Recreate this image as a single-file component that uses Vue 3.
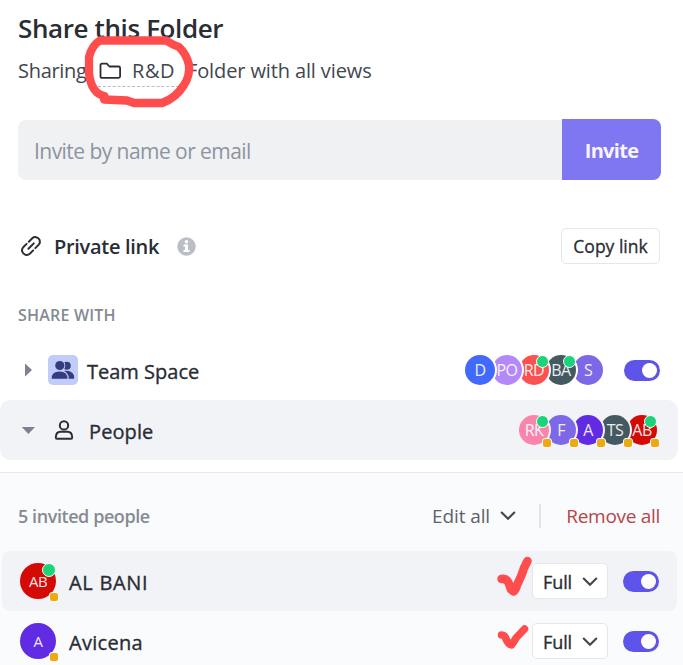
<script setup>
const team = [
  { t: 'D', c: '#4169fb' },
  { t: 'PO', c: '#b388f8' },
  { t: 'RD', c: '#fb5151', on: true },
  { t: 'BA', c: '#455a60', on: true },
  { t: 'S', c: '#7d68e8' },
]
const people = [
  { t: 'RK', c: '#f985ad', on: true },
  { t: 'F', c: '#7d68e8' },
  { t: 'A', c: '#612be3' },
  { t: 'TS', c: '#455a60' },
  { t: 'AB', c: '#d30a05', on: true },
]
const invited = [
  { name: 'AL BANI', t: 'AB', c: '#d30a05', on: true, hot: true, cls: 'n1' },
  { name: 'Avicena', t: 'A', c: '#612be3', on: false, hot: false, cls: 'n2' },
]
</script>

<template>
  <main class="share">
    <h1><span>Share this Folder</span></h1>
    <div class="sub">
      <span class="s1">Sharing</span>
      <span class="folder">
        <svg width="23" height="18" viewBox="0 0 23 18"><path d="M1.500 14.500V3.200Q1.500 1.700 3 1.700H7.800L10.400 4.500H19.600Q21.100 4.500 21.100 6V14.300Q21.100 15.800 19.600 15.800H3Q1.500 15.800 1.500 14.500Z" fill="none" stroke="#2b2f34" stroke-width="1.800" stroke-linejoin="round" /></svg>
        <span class="rd">R&amp;D</span>
      </span>
      <span class="s2">Folder with all views</span>
      <svg class="ring" width="112" height="76" viewBox="0 0 112 76"><path d="M21.500 63 Q15 62 11 56 Q7 50 6 40 V24 Q9 12 17 7.500 H83 L90 11.500 L96 14 Q103.500 21 106 32 Q107 43 101 52 Q93 65 79 70 L51 70 L44 67.500 L21 66.500" fill="none" stroke="#ff4d4d" stroke-width="8.300" stroke-linejoin="round" stroke-linecap="round" /></svg>
    </div>

    <div class="invite">
      <div class="field"><span>Invite by name or email</span></div>
      <button class="go"><span>Invite</span></button>
    </div>

    <div class="private">
      <svg width="22" height="22" viewBox="0 0 22 22" fill="none" stroke="#2b2f34" stroke-width="2" stroke-linecap="round"><path d="M8.400 13.800 L13.800 8.400" /><path d="M8.800 6.700 L12.300 3.200 Q14 1.600 16.200 2.200 Q18.700 2.800 19.700 5.200 Q20.500 7.700 18.800 9.600 L15.300 13.100" /><path d="M6.600 8.900 L3.200 12.300 Q1.500 14.200 2.200 16.500 Q3 19 5.600 19.800 Q8 20.400 9.800 18.800 L13.200 15.400" /></svg>
      <span class="pl">Private link</span>
      <svg class="info" width="19" height="19" viewBox="0 0 19 19"><circle cx="9.500" cy="9.500" r="9.200" fill="#b9bec7" /><circle cx="9.500" cy="4.800" r="1.800" fill="#fff" /><path d="M6.500 7.500H11V13H12.600V15H6.500V13H8V9.500H6.500Z" fill="#fff" /></svg>
      <button class="copy"><span>Copy link</span></button>
    </div>

    <div class="label"><span>SHARE WITH</span></div>

    <div class="row team">
      <svg class="tri" width="14" height="14" viewBox="0 0 14 14"><path d="M4 0.500L11 7L4 13.500Z" fill="#7c828d" /></svg>
      <span class="tile"><svg width="24" height="20" viewBox="0 0 24 20"><circle cx="15.800" cy="5.800" r="4" fill="#343d7d" /><path d="M13 11Q20 10 22.800 15Q23.500 17 23 18.800H15Z" fill="#343d7d" /><circle cx="8.800" cy="5.500" r="5.500" fill="#c2ccfb" /><circle cx="8.800" cy="5.500" r="4.600" fill="#343d7d" /><path d="M0 19.800Q0 10.300 8.800 10.300Q18 10.300 17.800 19.800Z" fill="#c2ccfb" /><path d="M0.700 18.800Q0.500 11.500 8.500 11.500Q16.500 11.500 16.500 18.800Z" fill="#343d7d" /></svg></span>
      <span class="ts">Team Space</span>
      <div class="avatars">
        <span v-for="(a, i) in team" :key="i" class="av" :style="{ background: a.c, zIndex: 9 - i }"><span>{{ a.t }}</span><i v-if="a.on" class="on"></i></span>
      </div>
      <span class="toggle"></span>
    </div>

    <div class="row people">
      <svg class="tri" width="14" height="14" viewBox="0 0 14 14"><path d="M0.800 4L14 4L7.400 11Z" fill="#7c828d" /></svg>
      <svg class="person" width="20" height="20" viewBox="0 0 20 20" fill="none" stroke="#2b2f34" stroke-width="2"><circle cx="10" cy="5.400" r="4.200" /><path d="M1.800 17.200Q2 11.700 6.500 11.700H13.500Q18 11.700 18.200 17.200Q18.200 18.800 17 18.800H3Q1.800 18.800 1.800 17.200Z" stroke-linejoin="round" /></svg>
      <span class="pp">People</span>
      <div class="avatars">
        <span v-for="(a, i) in people" :key="i" class="av" :style="{ background: a.c, zIndex: 9 - i }"><span>{{ a.t }}</span><i v-if="a.on" class="on"></i><i class="guest"></i></span>
      </div>
    </div>

    <section>
      <header>
        <span class="count">5 invited people</span>
        <span class="edit">Edit all</span>
        <svg class="chev" width="16" height="10" viewBox="0 0 16 10"><path d="M1.700 1.500L8 7.800L14.300 1.500" fill="none" stroke="#42474f" stroke-width="2.100" stroke-linecap="round" /></svg>
        <span class="bar"></span>
        <span class="remove">Remove all</span>
      </header>
      <div v-for="p in invited" :key="p.name" class="member" :class="{ hot: p.hot }">
        <span class="av big" :style="{ background: p.c }"><span>{{ p.t }}</span><i v-if="p.on" class="on"></i><i class="guest"></i></span>
        <span class="name" :class="p.cls">{{ p.name }}</span>
        <svg v-if="p.hot" class="tick" width="36" height="42" viewBox="0 0 36 42"><path d="M4.500 23Q10 22 12 28L14 33.500L16.500 35.500Q19 34 20 29Q25 19 27 12L30.500 5" fill="none" stroke="#ff4d4d" stroke-width="8.500" stroke-linecap="round" stroke-linejoin="round" /></svg>
        <svg v-else class="tick" width="36" height="42" viewBox="0 0 36 42"><path d="M4.500 19Q8 19 9 23Q11 28 14.500 29Q17 26 19 22L27.500 13" fill="none" stroke="#ff4d4d" stroke-width="7.500" stroke-linecap="round" stroke-linejoin="round" /></svg>
        <button class="full"><span>Full</span><svg width="16" height="10" viewBox="0 0 16 10"><path d="M1.700 1.500L8 7.800L14.300 1.500" fill="none" stroke="#42474f" stroke-width="2.100" stroke-linecap="round" /></svg></button>
        <span class="toggle"></span>
      </div>
    </section>
  </main>
</template>

<style>
body { margin: 0; background: #fff; }
</style>

<style scoped>
* { box-sizing: border-box; }
.share { width: 683px; height: 665px; overflow: hidden; background: #fff; font-family: "Open Sans", "Noto Sans", sans-serif; color: #292d34; white-space: nowrap; line-height: 1; }
button { font: inherit; padding: 0; margin: 0; border: 0; }
svg { display: block; flex: none; }
h1 { margin: 0; height: 50px; padding: 7px 0 0 18px; font-size: 26px; line-height: 42px; font-weight: 600; letter-spacing: -0.38px; }
.sub { position: relative; height: 70px; display: flex; padding-left: 18px; font-size: 20px; line-height: 42px; color: #42464d; }
.s1 { width: 80px; letter-spacing: -0.3px; }
.folder { display: flex; width: 81px; height: 37px; border-bottom: 1px dashed #b9bdc4; padding-left: 1px; }
.folder svg { margin-top: 12px; }
.rd { margin-left: 10px; letter-spacing: .6px; }
.s2 { margin-left: 8px; letter-spacing: -0.12px; }
.ring { position: absolute; left: 83px; top: -17px; }
.invite { display: flex; align-items: flex-end; height: 61px; margin: -1px 22px 0 18px; }
.field { width: 544px; height: 60px; background: #eff1f3; border-radius: 8px 0 0 8px; padding-left: 16px; font-size: 21px; line-height: 63px; color: #8d94a1; letter-spacing: -0.55px; }
.go { width: 99px; height: 61px; border-radius: 0 8px 8px 0; background: #7f76f1; color: #f6f5ff; font-size: 20px; font-weight: 700; letter-spacing: -.7px; padding-top: 2px; }
.private { display: flex; align-items: center; height: 36px; margin: 48px 23px 0 20px; }
.pl { margin-left: 12px; padding-top: 2px; font-size: 20px; font-weight: 600; letter-spacing: -0.3px; }
.info { margin-left: 18px; }
.copy { margin-left: auto; width: 99px; height: 36px; border: 1px solid #e6e7eb; border-radius: 5px; background: #fff; color: #292d34; font-size: 17.5px; -webkit-text-stroke: .3px; padding-top: 2px; }
.label { margin-top: 36px; height: 40px; padding-left: 18px; font-size: 16px; font-weight: 600; line-height: 31px; color: #858a94; letter-spacing: .2px; }
.row { display: flex; align-items: center; height: 60px; width: 678px; padding: 0 18px 0 21px; font-size: 20px; }
.people { background: #f2f3f7; border-radius: 10px; --bg: #f2f3f7; }
.team { --bg: #fff; }
.tile { margin-left: 13px; width: 30px; height: 30px; background: #c2ccfb; border-radius: 5px; display: flex; justify-content: center; align-items: center; }
.ts, .pp, .name { padding-top: 3px; -webkit-text-stroke: .35px; }
.ts { margin-left: 9px; }
.person { margin-left: 19px; }
.pp { margin-left: 15px; letter-spacing: .1px; }
.avatars { display: flex; margin-left: auto; }
.av { position: relative; width: 30px; height: 30px; border-radius: 50%; display: flex; align-items: center; justify-content: center; color: #fff; font-size: 16px; font-weight: 400; box-shadow: 0 0 0 2px var(--bg); }
.av + .av { margin-left: -3px; }
.av > span { opacity: .9; letter-spacing: -.6px; }
.on, .guest { position: absolute; box-sizing: content-box; border: 1px solid #fff; }
.on { width: 11px; height: 11px; border-radius: 50%; right: 0; top: 0; background: #1bd47a; }
.guest { width: 8px; height: 8px; border-radius: 3px; right: -3px; bottom: -3px; background: #eda812; }
.toggle { width: 36px; height: 21px; border-radius: 11px; background: #5e54e9; padding: 3px; display: flex; justify-content: flex-end; }
.toggle::after { content: ''; width: 15px; height: 15px; border-radius: 50%; background: #fff; }
.team .toggle { margin-left: 21px; }
.people .avatars { margin-right: 3px; }
section { margin-top: 12px; border-top: 1px solid #e6e8ec; background: #fafbfc; height: 200px; --bg: transparent; }
header { display: flex; align-items: center; height: 78px; padding: 8px 23px 0 18px; font-size: 19px; color: #5c626d; }
.count { width: 414px; font-size: 18px; font-weight: 600; color: #858a94; letter-spacing: -.43px; }
.edit { width: 68px; letter-spacing: -.1px; }
.bar { width: 2px; height: 24px; background: #e2e4e9; margin-left: 23px; }
.remove { margin-left: auto; color: #b6454a; letter-spacing: -.3px; }
.member { display: flex; align-items: center; height: 60px; width: 675px; margin-left: 2px; padding: 0 18px; border-radius: 8px; font-size: 20px; }
.hot { background: #f2f3f7; }
.big { width: 36px; height: 36px; }
.big > span { font-size: 15px; padding-top: 1px; }
.big .on { right: 0; top: 0; width: 12px; height: 12px; }
.name { margin-left: 13px; }
.n1 { letter-spacing: .7px; }
.n2 { letter-spacing: .3px; }
.tick { margin: -9px -1px 0 auto; }
.full { display: flex; align-items: center; width: 76px; height: 36px; border: 1px solid #e6e7eb; border-radius: 5px; background: #fff; padding-left: 10px; font-size: 18px; color: #292d34; margin-right: 15px; text-align: left; }
.full span { width: 39px; -webkit-text-stroke: .35px; letter-spacing: -.1px; padding-top: 1px; }
.full svg { margin-top: 2px; }
</style>
